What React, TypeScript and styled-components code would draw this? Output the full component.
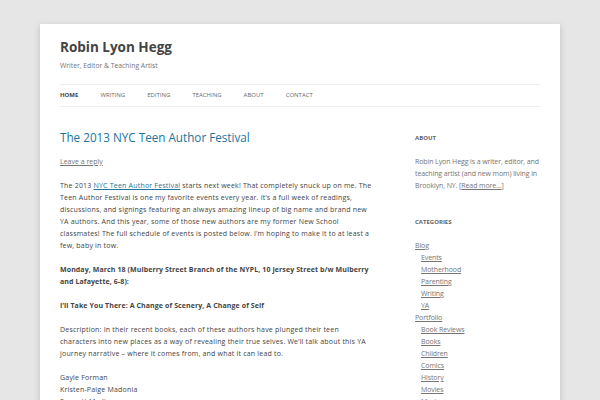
import styled, { createGlobalStyle } from "styled-components";

const GlobalStyle = createGlobalStyle`
  html, body {
    margin: 0;
    padding: 0;
    background: #e6e6e6;
    font-family: "Open Sans", "Liberation Sans", sans-serif;
    color: #444;
  }
`;

const Page = styled.div`
  margin: 24px 40px 0;
  padding: 0 20px;
  background: #fff;
  box-shadow: 0 2px 6px rgba(100, 100, 100, 0.3);
  min-height: 400px;
`;

const Header = styled.header`
  padding-top: 14px;
`;

const SiteTitle = styled.h1`
  margin: 0;
  font-size: 13.5px;
  line-height: 18px;
  font-weight: 700;
  color: #444;
`;

const Tagline = styled.h2`
  margin: 4px 0 0;
  font-size: 6.8px;
  line-height: 12px;
  font-weight: 400;
  color: #757575;
`;

const Nav = styled.nav`
  margin-top: 12px;
  border-top: 1px solid #ededed;
  border-bottom: 1px solid #ededed;
  display: flex;
  height: 21px;
  align-items: center;
`;

const NavItem = styled.a<{ $current?: boolean }>`
  margin-right: 22px;
  font-size: 6px;
  line-height: 21px;
  text-transform: uppercase;
  text-decoration: none;
  color: ${({ $current }) => ($current ? "#444" : "#6a6a6a")};
  font-weight: ${({ $current }) => ($current ? 700 : 400)};
`;

const Main = styled.div`
  display: flex;
  justify-content: space-between;
  padding-top: 23px;
`;

const Content = styled.article`
  width: 312px;
`;

const EntryTitle = styled.h1`
  margin: 0;
  font-size: 11.7px;
  line-height: 15px;
  font-weight: 400;
  color: #21759b;
`;

const Meta = styled.a`
  display: block;
  margin: 11px 0 12px;
  font-size: 7px;
  line-height: 12px;
  color: #757575;
  text-decoration: underline;
`;

const Para = styled.p<{ $bold?: boolean }>`
  margin: 0 0 12px;
  font-size: 7px;
  line-height: 12px;
  letter-spacing: ${({ $bold }) => ($bold ? "0.1px" : "0.2px")};
  font-weight: ${({ $bold }) => ($bold ? 700 : 400)};
  color: #444;
`;

const TextLink = styled.a`
  color: #21759b;
  text-decoration: underline;
`;

const Sidebar = styled.aside`
  width: 125px;
  padding-top: 2px;
`;

const Widget = styled.section`
  margin-bottom: 24px;
`;

const WidgetTitle = styled.h3`
  margin: 0 0 12px;
  font-size: 6px;
  line-height: 12px;
  font-weight: 700;
  text-transform: uppercase;
  color: #636363;
`;

const WidgetText = styled.p`
  margin: 0;
  font-size: 7px;
  line-height: 12px;
  letter-spacing: -0.1px;
  color: #757575;
`;

const GreyLink = styled.a`
  color: #757575;
  text-decoration: underline;
`;

const CatList = styled.ul<{ $nested?: boolean }>`
  list-style: none;
  margin: 0;
  padding: 0 0 0 ${({ $nested }) => ($nested ? "6px" : "0")};
`;

const CatItem = styled.li`
  font-size: 7px;
  line-height: 12px;
  letter-spacing: -0.1px;
  color: #757575;
`;

const navItems = ["Home", "Writing", "Editing", "Teaching", "About", "Contact"];

const categories: { name: string; children: string[] }[] = [
  {
    name: "Blog",
    children: ["Events", "Motherhood", "Parenting", "Writing", "YA"],
  },
  {
    name: "Portfolio",
    children: [
      "Book Reviews",
      "Books",
      "Children",
      "Comics",
      "History",
      "Movies",
      "Music",
    ],
  },
];

export default function App() {
  return (
    <>
      <GlobalStyle />
      <Page>
        <Header>
          <SiteTitle>Robin Lyon Hegg</SiteTitle>
          <Tagline>Writer, Editor &amp; Teaching Artist</Tagline>
          <Nav>
            {navItems.map((item, i) => (
              <NavItem key={item} href="#" $current={i === 0}>
                {item}
              </NavItem>
            ))}
          </Nav>
        </Header>

        <Main>
          <Content>
            <EntryTitle>The 2013 NYC Teen Author Festival</EntryTitle>
            <Meta href="#">Leave a reply</Meta>
            <Para>
              The 2013 <TextLink href="#">NYC Teen Author Festival</TextLink>{" "}
              starts next week! That completely snuck up on me. The Teen Author
              Festival is one my favorite events every year. It’s a full week of
              readings, discussions, and signings featuring an always amazing
              lineup of big name and brand new YA authors. And this year, some
              of those new authors are my former New School classmates! The full
              schedule of events is posted below. I’m hoping to make it to at
              least a few, baby in tow.
            </Para>
            <Para $bold>
              Monday, March 18 (Mulberry Street Branch of the NYPL, 10 Jersey
              Street b/w Mulberry and Lafayette, 6-8):
            </Para>
            <Para $bold>
              I’ll Take You There: A Change of Scenery, A Change of Self
            </Para>
            <Para>
              Description: In their recent books, each of these authors have
              plunged their teen characters into new places as a way of
              revealing their true selves. We’ll talk about this YA journey
              narrative – where it comes from, and what it can lead to.
            </Para>
            <Para>
              Gayle Forman
              <br />
              Kristen-Paige Madonia
              <br />
              Emmett Madison
            </Para>
          </Content>

          <Sidebar>
            <Widget>
              <WidgetTitle>About</WidgetTitle>
              <WidgetText>
                Robin Lyon Hegg is a writer, editor, and teaching artist (and
                new mom) living in Brooklyn, NY. [
                <GreyLink href="#">Read more…</GreyLink>]
              </WidgetText>
            </Widget>
            <Widget>
              <WidgetTitle>Categories</WidgetTitle>
              <CatList>
                {categories.map((cat) => (
                  <CatItem key={cat.name}>
                    <GreyLink href="#">{cat.name}</GreyLink>
                    <CatList $nested>
                      {cat.children.map((child) => (
                        <CatItem key={child}>
                          <GreyLink href="#">{child}</GreyLink>
                        </CatItem>
                      ))}
                    </CatList>
                  </CatItem>
                ))}
              </CatList>
            </Widget>
          </Sidebar>
        </Main>
      </Page>
    </>
  );
}
